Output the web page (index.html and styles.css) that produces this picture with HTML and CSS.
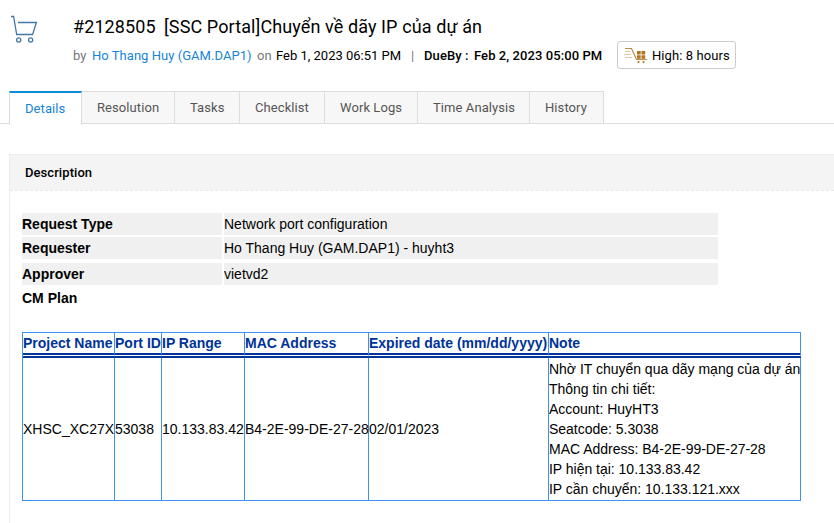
FILE: index.html
```html
<!DOCTYPE html>
<html lang="vi">
<head>
<meta charset="utf-8">
<title>Request #2128505</title>
<link rel="stylesheet" href="styles.css">
</head>
<body>
<header class="request-header">
  <svg class="cart" width="28" height="30" viewBox="0 0 28 30" fill="none" stroke="#4577a5" stroke-width="1.3">
    <path d="M0 1.500h2.600L5.700 19.500h15.900L25.400 7.500H7"/>
    <circle cx="7.700" cy="25" r="2.100"/><circle cx="19.600" cy="25" r="2.100"/>
  </svg>
  <div class="heading">
    <h1><span class="request-id">#2128505</span><span class="subject">[SSC Portal]Chuyển về dãy IP của dự án</span></h1>
    <div class="meta">
      <span class="muted by">by</span><a class="name">Ho Thang Huy (GAM.DAP1)</a><span class="muted on">on</span><span class="created">Feb 1, 2023 06:51 PM</span><span class="bar">|</span><b class="due-label">DueBy :</b><b class="due">Feb 2, 2023 05:00 PM</b>
      <span class="priority">
        <svg width="24" height="17" viewBox="0 0 24 17" fill="none">
          <path d="M1 1.500h6.500l5 11h10.500" stroke="#bd8b4b" stroke-width="1.200"/>
          <path d="M1 4.500h5M0 7.500h7M1 10.500h7" stroke="#ddc6a8"/>
          <path d="M13 4h3.700v3.500H13zM17.500 4h3.700v3.500h-3.700zM13 8.200h3.700v3.600H13zM17.500 8.200h3.700v3.600h-3.700z" fill="#b37420"/>
          <circle cx="14.500" cy="15" r="1.100" fill="#b37420"/><circle cx="19.500" cy="15" r="1.100" fill="#b37420"/>
        </svg><span class="priority-text">High: 8 hours</span>
      </span>
    </div>
  </div>
</header>
<nav class="tabs">
  <a class="tab active"><span>Details</span></a><a class="tab resolution"><span>Resolution</span></a><a class="tab tasks"><span>Tasks</span></a><a class="tab checklist"><span>Checklist</span></a><a class="tab logs"><span>Work Logs</span></a><a class="tab time"><span>Time Analysis</span></a><a class="tab history"><span>History</span></a>
</nav>
<section class="panel">
  <h2><span>Description</span></h2>
  <div class="content">
    <dl class="fields">
      <dt>Request Type</dt><dd>Network port configuration</dd>
      <dt>Requester</dt><dd>Ho Thang Huy (GAM.DAP1) - huyht3</dd>
      <dt class="spaced">Approver</dt><dd class="spaced">vietvd2</dd>
      <dt class="plain">CM Plan</dt>
    </dl>
    <div class="plan">
      <div class="th">Project Name</div><div class="th">Port ID</div><div class="th">IP Range</div><div class="th">MAC Address</div><div class="th">Expired date (mm/dd/yyyy)</div><div class="th">Note</div>
      <div class="td">XHSC_XC27X</div><div class="td">53038</div><div class="td">10.133.83.42</div><div class="td">B4-2E-99-DE-27-28</div><div class="td">02/01/2023</div><div class="td note"><div>Nhờ IT chuyển qua dãy mạng của dự án<br>Thông tin chi tiết:<br>Account: HuyHT3<br>Seatcode: 5.3038<br>MAC Address: B4-2E-99-DE-27-28<br>IP hiện tại: 10.133.83.42<br>IP cần chuyển: 10.133.121.xxx</div></div>
    </div>
  </div>
</section>
</body>
</html>
```
FILE: styles.css
```css
* { box-sizing: border-box; }
body { margin: 0; background: #fff; color: #000; font: 13px Roboto, sans-serif; overflow: hidden; }
.request-header { display: flex; height: 91px; padding: 15px 0 0 11px; }
.cart { flex: none; margin-right: 34px; }
h1 { display: flex; margin: 0; font-size: 18px; font-weight: 400; line-height: 24px; white-space: nowrap; }
.request-id { width: 91px; letter-spacing: .1px; }
.subject { letter-spacing: .1px; }
.meta { display: flex; align-items: center; height: 28px; margin-top: 2px; white-space: nowrap; }
.muted { color: #777; }
.by { width: 19px; }
.name { width: 165px; color: #1883d7; letter-spacing: .04px; }
.on { width: 19px; }
.created { width: 135px; }
.bar { width: 13px; color: #777; }
b { font-weight: 500; }
.due-label { width: 50px; letter-spacing: .1px; }
.due { width: 143px; letter-spacing: .08px; }
.priority { display: flex; align-items: center; width: 119px; height: 28px; padding-left: 6px; border: 1px solid #ccc; border-radius: 3px; }
.priority svg { margin-right: 4px; }
.priority-text { letter-spacing: .08px; }
.tabs { display: flex; height: 33px; padding-left: 9px; border-bottom: 1px solid #ddd; }
.tab { height: 33px; padding-left: 15px; border: 1px solid #ddd; border-left: 0; background: #f7f7f7; color: #555; line-height: 32px; letter-spacing: .08px; }
.active { width: 73px; height: 34px; border-left: 1px solid #ddd; border-top: 2px solid #0b8ddb; border-bottom: 0; background: #fff; color: #1883d7; }
.resolution { width: 93px; }
.tasks { width: 65px; }
.checklist { width: 85px; }
.logs { width: 93px; }
.time { width: 112px; }
.history { width: 74px; }
.panel { height: 369px; margin: 30px 0 0 9px; border: solid #ececec; border-width: 1px 0 0 1px; }
h2 { height: 36px; margin: 0; padding-left: 15px; border-bottom: 1px dashed #e8e8e8; background: #f4f4f4; background-clip: padding-box; font-size: 13px; font-weight: 500; line-height: 35px; letter-spacing: .07px; }
.content { padding: 22px 0 0 12px; font: 14px/20px "Liberation Sans", Arial, sans-serif; }
.fields { display: grid; grid-template-columns: 200px 494px; gap: 2px; margin: 0; }
.fields dt, .fields dd { height: 22px; margin: 0; background: #f0f0f0; line-height: 22px; white-space: nowrap; }
.fields dt { font-weight: 700; }
.fields .spaced { margin-top: 2px; }
.fields .plain { background: none; }
.plan { display: grid; grid-template-columns: 92px 47px 83px 124px 180px 252px; grid-template-rows: 26px 143px; width: 779px; margin-top: 23px; border-left: 1px solid #3d92ee; }
.th, .td { border-right: 1px solid #3d92ee; white-space: nowrap; }
.th { border-top: 1px solid #3d92ee; border-bottom: 5px double #039; color: #039; font-weight: 700; }
.td { display: flex; align-items: center; border-bottom: 1px solid #3d92ee; }
.note { letter-spacing: -.015px; }
```
